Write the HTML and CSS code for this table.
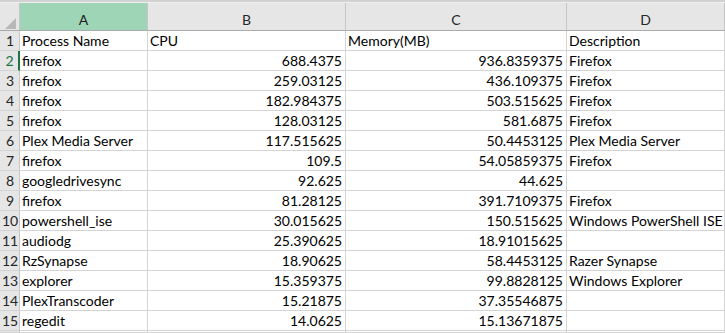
FILE: index.html
```html
<!DOCTYPE html>
<html>
<head>
<meta charset="utf-8">
<link rel="stylesheet" href="styles.css">
</head>
<body>
<div class="topstrip"></div>
<div class="sheet">
  <div class="corner"><svg width="20" height="27" viewBox="0 0 20 27"><polygon points="16,15 16,26 5,26" fill="#b8b8b8"/></svg></div>
  <div class="colhead sel">A</div>
  <div class="colhead">B</div>
  <div class="colhead">C</div>
  <div class="colhead">D</div>

  <div class="rowhead">1</div><div class="cell">Process Name</div><div class="cell">CPU</div><div class="cell">Memory(MB)</div><div class="cell">Description</div>
  <div class="rowhead selrow">2</div><div class="cell">firefox</div><div class="cell num">688.4375</div><div class="cell num">936.8359375</div><div class="cell">Firefox</div>
  <div class="rowhead">3</div><div class="cell">firefox</div><div class="cell num">259.03125</div><div class="cell num">436.109375</div><div class="cell">Firefox</div>
  <div class="rowhead">4</div><div class="cell">firefox</div><div class="cell num">182.984375</div><div class="cell num">503.515625</div><div class="cell">Firefox</div>
  <div class="rowhead">5</div><div class="cell">firefox</div><div class="cell num">128.03125</div><div class="cell num">581.6875</div><div class="cell">Firefox</div>
  <div class="rowhead">6</div><div class="cell">Plex Media Server</div><div class="cell num">117.515625</div><div class="cell num">50.4453125</div><div class="cell">Plex Media Server</div>
  <div class="rowhead">7</div><div class="cell">firefox</div><div class="cell num">109.5</div><div class="cell num">54.05859375</div><div class="cell">Firefox</div>
  <div class="rowhead">8</div><div class="cell">googledrivesync</div><div class="cell num">92.625</div><div class="cell num">44.625</div><div class="cell"></div>
  <div class="rowhead">9</div><div class="cell">firefox</div><div class="cell num">81.28125</div><div class="cell num">391.7109375</div><div class="cell">Firefox</div>
  <div class="rowhead">10</div><div class="cell">powershell_ise</div><div class="cell num">30.015625</div><div class="cell num">150.515625</div><div class="cell">Windows PowerShell ISE</div>
  <div class="rowhead">11</div><div class="cell">audiodg</div><div class="cell num">25.390625</div><div class="cell num">18.91015625</div><div class="cell"></div>
  <div class="rowhead">12</div><div class="cell">RzSynapse</div><div class="cell num">18.90625</div><div class="cell num">58.4453125</div><div class="cell">Razer Synapse</div>
  <div class="rowhead">13</div><div class="cell">explorer</div><div class="cell num">15.359375</div><div class="cell num">99.8828125</div><div class="cell">Windows Explorer</div>
  <div class="rowhead">14</div><div class="cell">PlexTranscoder</div><div class="cell num">15.21875</div><div class="cell num">37.35546875</div><div class="cell"></div>
  <div class="rowhead">15</div><div class="cell">regedit</div><div class="cell num">14.0625</div><div class="cell num">15.13671875</div><div class="cell"></div>
  <div class="rowhead"></div><div class="cell"></div><div class="cell"></div><div class="cell"></div><div class="cell"></div>
</div>
</body>
</html>
```

FILE: styles.css
```css
html, body {
  margin: 0;
  padding: 0;
  background: #ffffff;
  overflow: hidden;
  width: 725px;
  height: 333px;
}
.topstrip {
  height: 2px;
  background: #d2d2d2;
  border-bottom: 1px solid #f0f0f0;
}
.sheet {
  display: grid;
  grid-template-columns: 20px 128px 198px 221px minmax(0, 1fr);
  grid-template-rows: 28px repeat(15, 20px) 2px;
  font-family: Lato, "Open Sans", sans-serif;
  font-size: 14px;
  color: #000;
  width: 725px;
  height: 330px;
  overflow: hidden;
}
.corner {
  background: #e6e6e6;
  border-right: 1px solid #c6c6c6;
  border-bottom: 1px solid #ababab;
  box-sizing: border-box;
  overflow: hidden;
}
.corner svg { display: block; }
.colhead {
  background: #e6e6e6;
  border-right: 1px solid #c6c6c6;
  border-bottom: 1px solid #ababab;
  box-sizing: border-box;
  display: flex;
  align-items: center;
  justify-content: center;
  color: #262626;
  padding-top: 5px;
}
.colhead.sel {
  background: #9fd5b7;
  color: #1d1d1d;
}
.rowhead {
  background: #e6e6e6;
  border-right: 1px solid #c6c6c6;
  border-bottom: 1px solid #d4d4d4;
  box-sizing: border-box;
  display: flex;
  align-items: flex-end;
  justify-content: center;
  color: #262626;
  line-height: 19px;
  padding-left: 1px;
  overflow: hidden;
}
.rowhead.selrow {
  border-right: 2px solid #217346;
  color: #217346;
}
.cell {
  border-right: 1px solid #d4d4d4;
  border-bottom: 1px solid #d4d4d4;
  box-sizing: border-box;
  line-height: 19px;
  padding: 0 3px 0 2px;
  white-space: nowrap;
  overflow: hidden;
}
.cell.num {
  text-align: right;
}
```
